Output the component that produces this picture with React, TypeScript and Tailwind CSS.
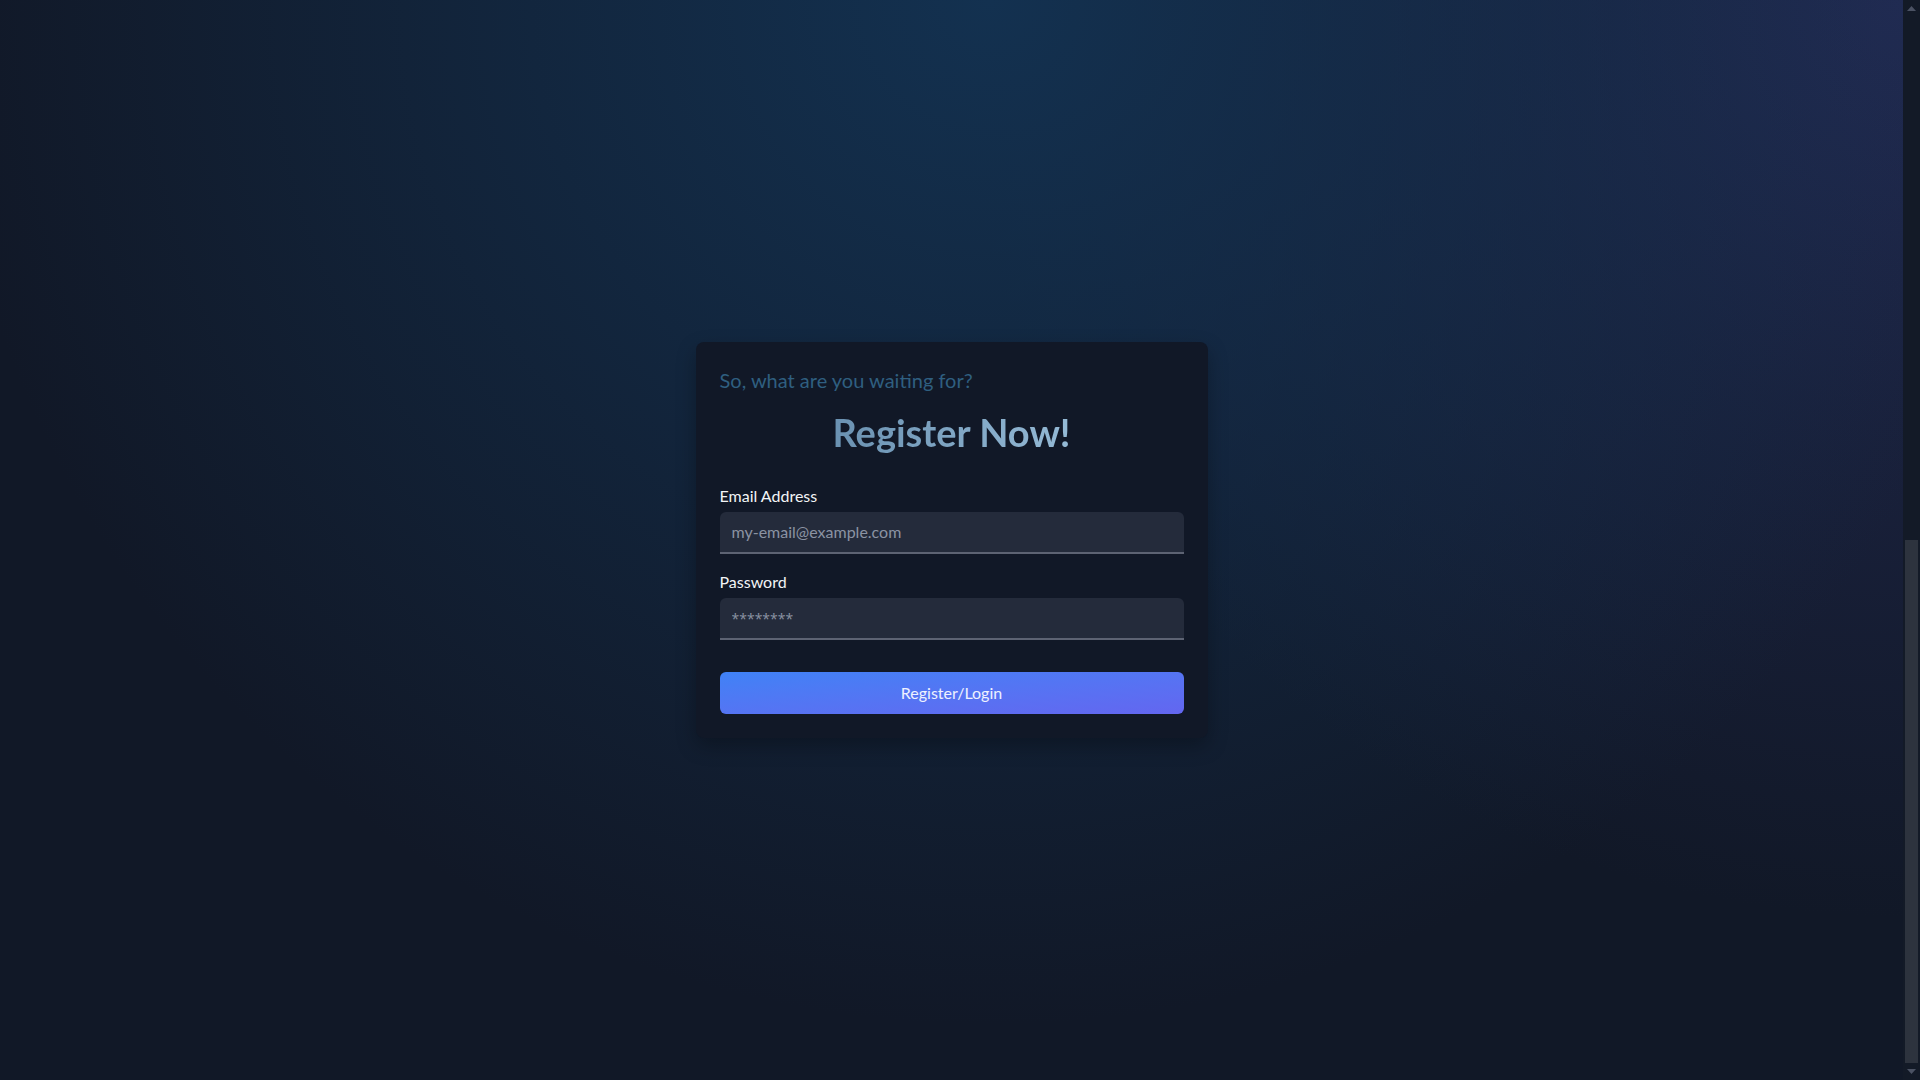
const ScrollArrow = ({ down }: { down?: boolean }) => (
  <div className="h-[17px] flex items-center justify-center">
    <svg width="9" height="5" viewBox="0 0 9 5" className={down ? 'rotate-180' : ''}>
      <path d="M0 5 L4.5 0 L9 5 Z" fill="#4b5263" />
    </svg>
  </div>
)

const App = () => {
  return (
    <div className="h-screen flex bg-[#111827] font-['Lato',sans-serif]">
      {/* Register section */}
      <main className="flex-1 flex items-center justify-center bg-[radial-gradient(ellipse_55%_95%_at_52%_0%,#133150_0%,rgba(19,49,80,0.55)_45%,rgba(17,24,39,0)_100%),radial-gradient(ellipse_50%_85%_at_100%_0%,#222a52_0%,rgba(34,42,82,0.5)_45%,rgba(17,24,39,0)_100%)] bg-[#111827]">
        {/* Card */}
        <div className="w-full max-w-lg p-6 bg-[#111827] rounded-lg shadow-[0_8px_20px_rgba(0,0,0,0.28)]">
          <p className="text-xl text-[#2f5f80]">So, what are you waiting for?</p>
          <h1 className="mt-[18px] text-[38px] leading-10 font-bold text-center">
            <span className="bg-gradient-to-r from-[#6a91b1] to-[#95bad6] bg-clip-text text-transparent">
              Register Now!
            </span>
          </h1>

          <form className="mt-8" onSubmit={(e) => e.preventDefault()}>
            <label className="block mb-1 text-base text-gray-100">Email Address</label>
            <input
              type="email"
              placeholder="my-email@example.com"
              className="w-full px-3 py-2 text-base text-gray-200 bg-[#242b3b] border-b-2 border-[#5d6373] rounded-t-md outline-none placeholder:text-[#8b93a3]"
            />

            <label className="block mt-4 mb-1 text-base text-gray-100">Password</label>
            <input
              type="password"
              placeholder="********"
              className="w-full px-3 py-2 text-base text-gray-200 bg-[#242b3b] border-b-2 border-[#5d6373] rounded-t-md outline-none placeholder:text-[#8b93a3] placeholder:font-['Open_Sans',sans-serif] placeholder:text-sm"
            />

            <button
              type="submit"
              className="w-full mt-8 py-[9px] text-base text-indigo-50 rounded-md bg-gradient-to-br from-[#3f82f6] to-[#6366f0]"
            >
              Register/Login
            </button>
          </form>
        </div>
      </main>

      {/* Page scrollbar, scrolled to the bottom */}
      <aside className="w-[17px] flex flex-col bg-[#131a27]">
        <ScrollArrow />
        <div className="flex-1 flex flex-col justify-end px-[2px]">
          <div className="h-1/2 bg-[#2d333e]" />
        </div>
        <ScrollArrow down />
      </aside>
    </div>
  )
}

export default App
